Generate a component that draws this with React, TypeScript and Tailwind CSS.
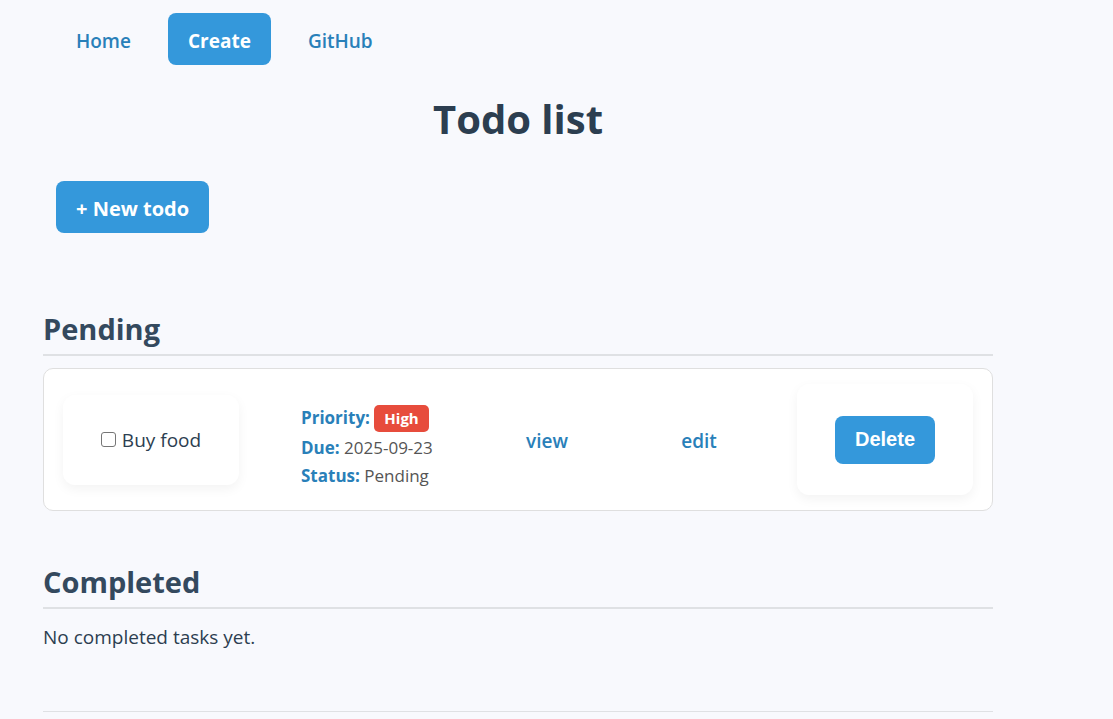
const todos = [
  { id: 1, title: "Buy food", priority: "High", due: "2025-09-23", status: "Pending" },
];

const textLink = "font-semibold text-[#2980b9]";
const navLink = "rounded-lg px-5 pt-3 pb-2";
const filledLink = "rounded-lg bg-[#3498db] px-5 pt-3 pb-2 font-bold text-white";
const panel = "flex items-center justify-center rounded-xl bg-white shadow-[0_4px_12px_rgba(0,0,0,0.05)]";

function SectionTitle({ children }: { children: string }) {
  return (
    <h2 className="border-b-2 border-[#dfe1e4] pb-1 text-[29px] leading-[42px] font-bold text-[#34495e]">
      {children}
    </h2>
  );
}

function TodoRow({ todo }: { todo: (typeof todos)[number] }) {
  return (
    <li className="grid grid-cols-[176px_1fr_152px_152px_198px] items-center rounded-[10px] border border-[#dfdfdf] bg-white px-[19px] py-[15px]">
      <div className={`${panel} h-[90px]`}>
        <label className="flex items-center gap-1.5">
          <input
            type="checkbox"
            className="size-[15px] appearance-none rounded-[3px] border border-[#767676] bg-white checked:bg-[#3498db]"
          />
          {todo.title}
        </label>
      </div>
      <div className="pt-3 pl-[62px] text-[17px] leading-7 text-[#555]">
        <p className="leading-8">
          <strong className="text-[#2980b9]">Priority:</strong>{" "}
          <span className="inline-block rounded-[5px] bg-[#e74c3c] px-2.5 text-[15px] leading-[27px] font-bold text-white">
            {todo.priority}
          </span>
        </p>
        <p>
          <strong className="text-[#2980b9]">Due:</strong> {todo.due}
        </p>
        <p>
          <strong className="text-[#2980b9]">Status:</strong> {todo.status}
        </p>
      </div>
      <a href="#view" className={`${textLink} pt-0.5 text-center`}>view</a>
      <a href="#edit" className={`${textLink} pt-0.5 text-center`}>edit</a>
      <form className={`${panel} h-[111px] w-44 justify-self-end`} onSubmit={(e) => e.preventDefault()}>
        <button
          type="submit"
          className="h-12 rounded-lg bg-[#3498db] px-5 pb-0.5 font-['Liberation_Sans',sans-serif] text-[20px] font-bold text-white"
        >
          Delete
        </button>
      </form>
    </li>
  );
}

export default function App() {
  return (
    <div className="min-h-screen bg-[#f8f9fd] pr-[120px] pl-[43px] font-['Open_Sans','Noto_Sans',sans-serif] text-[19px] leading-8 text-[#2c3e50]">
      <nav className="flex gap-[17px] px-[13px] pt-[13px]">
        <a href="#home" className={`${textLink} ${navLink}`}>Home</a>
        <a href="#create" className={filledLink}>Create</a>
        <a href="#github" className={`${textLink} ${navLink}`}>GitHub</a>
      </nav>
      <main>
        <h1 className="mt-6 text-center text-[40px] leading-[60px] font-bold">Todo list</h1>
        <div className="mt-8 flex px-[13px] text-[20px] leading-8">
          <a href="#new" className={filledLink}>+ New todo</a>
        </div>
        <section className="mt-[75px]">
          <SectionTitle>Pending</SectionTitle>
          <ul className="mt-3">
            {todos.map((todo) => (
              <TodoRow key={todo.id} todo={todo} />
            ))}
          </ul>
        </section>
        <section className="mt-[50px]">
          <SectionTitle>Completed</SectionTitle>
          <p className="mt-3">No completed tasks yet.</p>
        </section>
      </main>
      <hr className="mt-[58px] border-[#dfe1e4]" />
    </div>
  );
}
